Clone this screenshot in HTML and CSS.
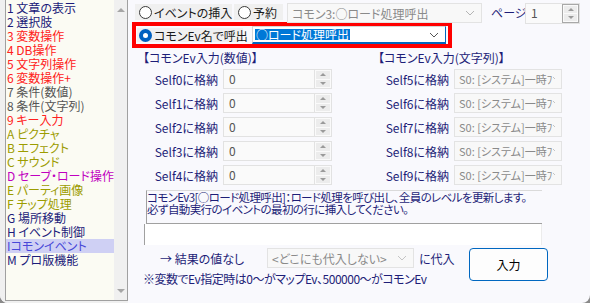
FILE: index.html
```html
<!DOCTYPE html>
<html lang="ja">
<head>
    <meta charset="UTF-8">
    <meta name="viewport" content="width=device-width, initial-scale=1.0">
    <title>コモンイベント</title>

    <link rel="stylesheet" href="styles.css">
</head>
<body>

    <div class="Window">
        <aside class="Side">
            <div class="ListBox">
                <ul class="Cmds">
                    <li class="navy">1 文章の表示</li>
                    <li class="navy">2 選択肢</li>
                    <li class="red">3 変数操作</li>
                    <li class="red">4 DB操作</li>
                    <li class="red">5 文字列操作</li>
                    <li class="red">6 変数操作+</li>
                    <li class="gray">7 条件(数値)</li>
                    <li class="gray">8 条件(文字列)</li>
                    <li class="red">9 キー入力</li>
                    <li class="olive">A ピクチャ</li>
                    <li class="olive">B エフェクト</li>
                    <li class="olive">C サウンド</li>
                    <li class="magenta">D セーブ・ロード操作</li>
                    <li class="olive">E パーティ画像</li>
                    <li class="olive">F チップ処理</li>
                    <li class="navy">G 場所移動</li>
                    <li class="navy">H イベント制御</li>
                    <li class="navy is-selected">Iコモンイベント</li>
                    <li class="navy">M プロ版機能</li>
                </ul>
                <div class="VScroll">
                    <span class="tri up"></span>
                    <span class="tri down"></span>
                </div>
            </div>
        </aside>

        <main class="Panel">
            <div class="TopRow">
                <label class="Radio r-insert"><span class="dot"></span>イベントの挿入</label>
                <label class="Radio r-reserve"><span class="dot"></span>予約</label>
                <div class="Combo is-disabled c-common">
                    <span class="val">コモン3:○ロード処理呼出</span>
                    <svg width="10" height="6"><polyline points="1,1 5,5 9,1" fill="none" stroke="#b4b4b4"/></svg>
                </div>
                <span class="PageLabel">ページ</span>
                <div class="Spin s-page">
                    <span class="val">1</span>
                    <span class="btns"><span class="b"><i class="tri up"></i></span><span class="b"><i class="tri down"></i></span></span>
                </div>
            </div>

            <!-- 赤枠はスクショの注釈 -->
            <div class="Mark">
                <label class="Radio r-name"><span class="dot is-on"></span>コモンEv名で呼出</label>
                <div class="Combo is-focus c-name">
                    <span class="sel">○ロード処理呼出</span>
                    <svg width="10" height="6"><polyline points="1,1 5,5 9,1" fill="none" stroke="#555"/></svg>
                </div>
            </div>

            <div class="Fields">
                <div class="Head">【コモンEv入力(数値)】</div>
                <div class="Head">【コモンEv入力(文字列)】</div>

                <div class="Row"><span class="lbl l-num">Self0に格納</span><div class="Spin s-num"><span class="val">0</span><span class="btns"><span class="b"><i class="tri up"></i></span><span class="b"><i class="tri down"></i></span></span></div></div>
                <div class="Row"><span class="lbl l-str">Self5に格納</span><div class="Combo is-disabled c-str"><span class="val">S0: [システム]一時ﾌ</span><svg width="10" height="6"><polyline points="1,1 5,5 9,1" fill="none" stroke="#c4c4c4"/></svg></div></div>

                <div class="Row"><span class="lbl l-num">Self1に格納</span><div class="Spin s-num"><span class="val">0</span><span class="btns"><span class="b"><i class="tri up"></i></span><span class="b"><i class="tri down"></i></span></span></div></div>
                <div class="Row"><span class="lbl l-str">Self6に格納</span><div class="Combo is-disabled c-str"><span class="val">S0: [システム]一時ﾌ</span><svg width="10" height="6"><polyline points="1,1 5,5 9,1" fill="none" stroke="#c4c4c4"/></svg></div></div>

                <div class="Row"><span class="lbl l-num">Self2に格納</span><div class="Spin s-num"><span class="val">0</span><span class="btns"><span class="b"><i class="tri up"></i></span><span class="b"><i class="tri down"></i></span></span></div></div>
                <div class="Row"><span class="lbl l-str">Self7に格納</span><div class="Combo is-disabled c-str"><span class="val">S0: [システム]一時ﾌ</span><svg width="10" height="6"><polyline points="1,1 5,5 9,1" fill="none" stroke="#c4c4c4"/></svg></div></div>

                <div class="Row"><span class="lbl l-num">Self3に格納</span><div class="Spin s-num"><span class="val">0</span><span class="btns"><span class="b"><i class="tri up"></i></span><span class="b"><i class="tri down"></i></span></span></div></div>
                <div class="Row"><span class="lbl l-str">Self8に格納</span><div class="Combo is-disabled c-str"><span class="val">S0: [システム]一時ﾌ</span><svg width="10" height="6"><polyline points="1,1 5,5 9,1" fill="none" stroke="#c4c4c4"/></svg></div></div>

                <div class="Row"><span class="lbl l-num">Self4に格納</span><div class="Spin s-num"><span class="val">0</span><span class="btns"><span class="b"><i class="tri up"></i></span><span class="b"><i class="tri down"></i></span></span></div></div>
                <div class="Row"><span class="lbl l-str">Self9に格納</span><div class="Combo is-disabled c-str"><span class="val">S0: [システム]一時ﾌ</span><svg width="10" height="6"><polyline points="1,1 5,5 9,1" fill="none" stroke="#c4c4c4"/></svg></div></div>
            </div>

            <div class="Desc">コモンEv3[○ロード処理呼出]：ロード処理を呼び出し、全員のレベルを更新します。<br>必ず自動実行のイベントの最初の行に挿入してください。</div>
            <div class="Blank"></div>

            <div class="Bottom">
                <div class="BottomLeft">
                    <div class="Result">
                        <span class="res-lbl">→ 結果の値なし</span>
                        <div class="Combo is-disabled c-res">
                            <span class="val">&lt;どこにも代入しない&gt;</span>
                            <svg width="10" height="6"><polyline points="1,1 5,5 9,1" fill="none" stroke="#c4c4c4"/></svg>
                        </div>
                        <span class="res-to">に代入</span>
                    </div>
                    <div class="Note">※変数でEv指定時は0〜がマップEv、500000〜がコモンEv</div>
                </div>
                <button class="Btn">入力</button>
            </div>
        </main>
    </div>

</body>
</html>
```

FILE: styles.css
```css
html,
body {
  margin: 0;
  height: 100%;
  overflow: hidden;
  background-color: #8a8a8a;
}

body {
  font-family: "Noto Sans CJK JP", "Noto Sans", sans-serif;
  font-feature-settings: "palt";
  font-size: 12px;
  color: #1e1e78;
}

.Window {
  display: flex;
  width: 590px;
  height: 303px;
  background: #f9f9fd;
  border-radius: 0 0 8px 8px;
  overflow: hidden;
}

/* left: command list */

.Side {
  width: 128px;
  padding-left: 5px;
  box-sizing: border-box;
  background: #f0f0f0;
}

.ListBox {
  display: flex;
  width: 123px;
  height: 301px;
  box-sizing: border-box;
  border: 1px solid #a0a0a0;
  border-top: none;
  background: #fbfbf3;
}

.Cmds {
  flex: 1;
  list-style: none;
  margin: 0;
  padding: 1px 0 0 0;
}

.Cmds li {
  height: 14px;
  line-height: 14px;
  padding-left: 1px;
  white-space: nowrap;
}

.navy { color: #1c1c7a; }
.red { color: #ff2020; }
.gray { color: #555555; }
.olive { color: #9c9c00; }
.magenta { color: #c000c0; }

.Cmds li.is-selected {
  background: #cfd0f4;
  color: #4848d8;
}

.VScroll {
  display: flex;
  flex-direction: column;
  justify-content: space-between;
  align-items: center;
  width: 16px;
  padding: 8px 0 7px;
  box-sizing: border-box;
  background: #f0f0f0;
}

.tri {
  display: block;
  width: 0;
  height: 0;
  border-left: 4px solid transparent;
  border-right: 4px solid transparent;
}

.tri.up { border-bottom: 4px solid #a6a6a6; }
.tri.down { border-top: 4px solid #a6a6a6; }

/* right: panel */

.Panel {
  flex: 1;
  padding-top: 3px;
}

.TopRow {
  display: flex;
  align-items: flex-start;
  height: 19px;
}

.Radio {
  display: flex;
  align-items: center;
  gap: 2px;
  height: 16px;
  padding-left: 4px;
  box-sizing: border-box;
  background: #f0f0f0;
  color: #1a1a1a;
  white-space: nowrap;
}

.dot {
  width: 11px;
  height: 11px;
  border: 1px solid #3a3a3a;
  border-radius: 50%;
  background: #fff;
  flex: none;
}

.dot.is-on {
  width: 5px;
  height: 5px;
  border: 4px solid #0060c0;
}

.r-insert {
  margin: 1px 0 0 7px;
  width: 97px;
}

.r-reserve {
  margin: 1px 0 0 2px;
  width: 49px;
}

.Combo {
  display: flex;
  align-items: center;
  justify-content: space-between;
  box-sizing: border-box;
  padding: 0 6px 0 4px;
  white-space: nowrap;
  overflow: hidden;
}

.Combo.is-disabled {
  background: #f8f8f8;
  border: 1px solid #e3e3e3;
  color: #8a8a8a;
}

.c-common {
  margin-left: 4px;
  width: 195px;
  height: 20px;
}

.PageLabel {
  flex: none;
  margin-left: 9px;
  width: 34px;
  line-height: 20px;
  white-space: nowrap;
}

.Spin {
  display: flex;
  justify-content: space-between;
  box-sizing: border-box;
  background: #fafafa;
  border: 1px solid #e2e2e2;
  color: #555;
}

.Spin .val {
  padding-left: 5px;
  line-height: 18px;
}

.Spin .btns {
  display: flex;
  flex-direction: column;
  gap: 1px;
  width: 17px;
  padding: 1px;
  box-sizing: border-box;
  border-left: 1px solid #e2e2e2;
}

.Spin .b {
  flex: 1;
  display: flex;
  align-items: center;
  justify-content: center;
  background: #ececec;
}

.Spin .tri {
  border-left-width: 3px;
  border-right-width: 3px;
}

.Spin .tri.up { border-bottom: 3px solid #9a9a9a; }
.Spin .tri.down { border-top: 3px solid #9a9a9a; }

.s-page {
  flex: none;
  width: 55px;
  height: 21px;
}

.s-page .btns {
  border: 1px solid #a8a8a8;
}

/* red annotation box */

.Mark {
  display: flex;
  align-items: center;
  width: 320px;
  height: 26px;
  margin-left: 4px;
  box-sizing: border-box;
  border: 4px solid #ff0000;
}

.r-name {
  margin-left: 1px;
  width: 106px;
  height: 14px;
  padding-left: 2px;
}

.Combo.is-focus {
  background: #fff;
  border: 1px solid #d6d6d6;
  border-right-color: #0067c0;
  border-bottom: 2px solid #0067c0;
  padding-left: 2px;
}

.c-name {
  margin-left: 9px;
  width: 194px;
  height: 18px;
}

.c-name .sel {
  background: #0078d7;
  color: #fff;
  line-height: 11px;
  padding: 0 1px;
}

/* inputs */

.Fields {
  display: grid;
  grid-template-columns: 235px 1fr;
  row-gap: 4px;
  margin: 3px 0 0 15px;
}

.Head {
  height: 14px;
  line-height: 14px;
  white-space: nowrap;
}

.Row {
  display: flex;
  align-items: center;
  height: 20px;
}

.lbl {
  text-align: right;
  white-space: nowrap;
  margin-right: 5px;
}

.l-num { width: 75px; }
.l-str { width: 71px; }

.s-num {
  width: 109px;
  height: 20px;
}

.c-str {
  width: 108px;
  height: 20px;
  font-size: 11px;
}

.Desc {
  width: 396px;
  height: 34px;
  margin: 5px 0 0 18px;
  box-sizing: border-box;
  border-left: 1px solid #a0a0a0;
  border-top: 1px solid #dadada;
  border-bottom: 1px solid #a0a0a0;
  font-size: 11.5px;
  line-height: 12px;
  letter-spacing: -0.6px;
  white-space: nowrap;
  overflow: hidden;
}

.Blank {
  width: 398px;
  height: 21px;
  margin-left: 16px;
  box-sizing: border-box;
  border-left: 1px solid #a0a0a0;
  border-right: 1px solid #ececec;
  background: #fff;
}

.Bottom {
  display: flex;
  align-items: flex-start;
  margin-top: 3px;
}

.BottomLeft {
  width: 341px;
}

.Result {
  display: flex;
  align-items: center;
  height: 20px;
}

.res-lbl {
  margin-left: 32px;
  width: 107px;
  white-space: nowrap;
}

.c-res {
  width: 147px;
  height: 20px;
}

.res-to {
  margin-left: 5px;
}

.Note {
  margin: 5px 0 0 15px;
  line-height: 12px;
  letter-spacing: -0.5px;
  white-space: nowrap;
}

.Btn {
  width: 79px;
  height: 33px;
  background: #fdfdfd;
  border: 1px solid #0067c0;
  border-radius: 4px;
  font: inherit;
  color: #000;
}
```
